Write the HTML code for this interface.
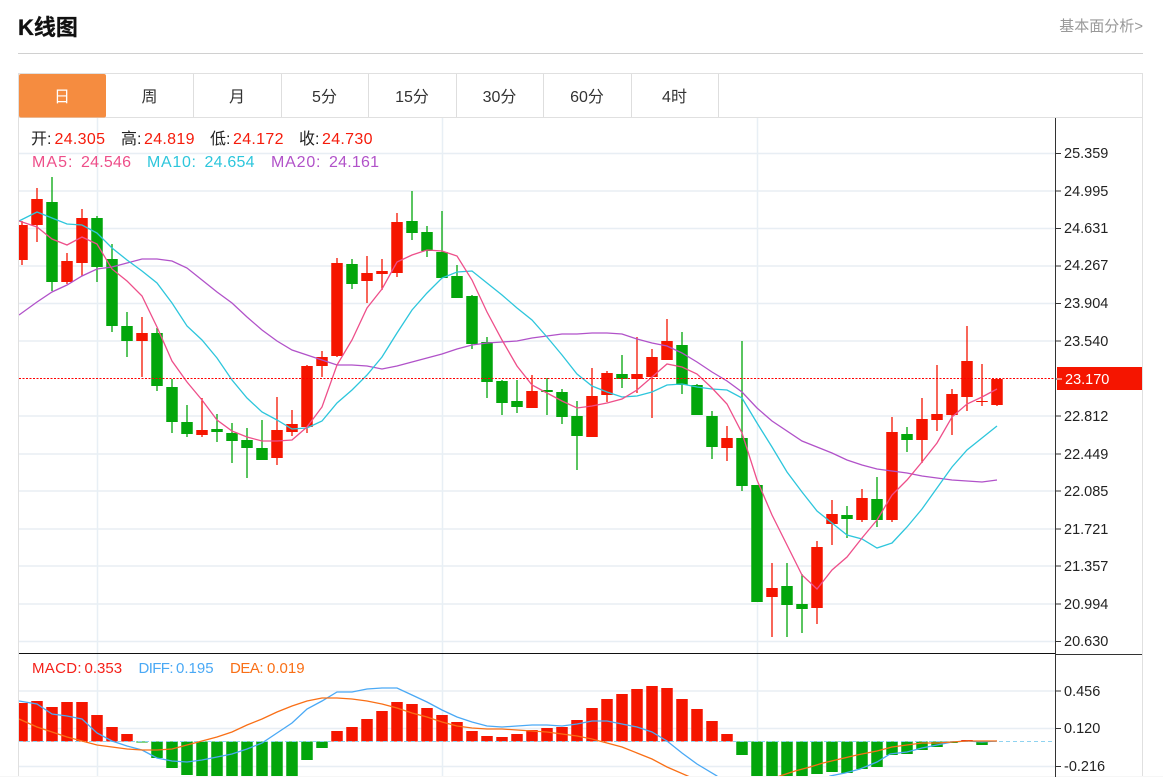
<!DOCTYPE html>
<html lang="zh-CN">
<head>
<meta charset="utf-8">
<title>K线图</title>
<style>
html,body{margin:0;padding:0;background:#fff;width:1163px;height:777px;overflow:hidden}
svg{display:block}
text{font-family:"Liberation Sans","Noto Sans CJK SC",sans-serif}
.ax{font-size:14.5px;fill:#222;dominant-baseline:auto}
.tab{font-size:16px;fill:#333;text-anchor:middle}
.leg{font-size:16px}
.mac{font-size:15px}
</style>
</head>
<body>
<svg width="1163" height="777" viewBox="0 0 1163 777" xmlns="http://www.w3.org/2000/svg">
<defs>
<clipPath id="k"><rect x="19" y="118" width="1036" height="535"/></clipPath>
<clipPath id="m"><rect x="19" y="655" width="1036" height="121"/></clipPath>
</defs>
<text x="18" y="35" font-size="22" font-weight="700" fill="#111" stroke="#111" stroke-width="0.3">K线图</text>
<text x="1143" y="31" font-size="15" fill="#999" text-anchor="end">基本面分析&gt;</text>
<rect x="18" y="53" width="1125" height="1" fill="#d0d0d0"/>

<!-- tab bar / frame -->
<path d="M18.5 777V73.5H1142.5V777M18.5 117.5H1142.5" fill="none" stroke="#e0e0e0"/>
<path d="M193.5 74V117M281.5 74V117M368.5 74V117M456.5 74V117M543.5 74V117M631.5 74V117M718.5 74V117" fill="none" stroke="#dedede"/>
<rect x="19" y="74" width="87" height="43.5" rx="2" fill="#f58c40"/>
<text class="tab" x="62" y="102" style="fill:#fff">日</text>
<text class="tab" x="149.5" y="102">周</text>
<text class="tab" x="237" y="102">月</text>
<text class="tab" x="324.5" y="102">5分</text>
<text class="tab" x="412" y="102">15分</text>
<text class="tab" x="499.5" y="102">30分</text>
<text class="tab" x="587" y="102">60分</text>
<text class="tab" x="674.5" y="102">4时</text>

<!-- grid -->
<path d="M19 153.5H1055M19 191H1055M19 228.5H1055M19 266H1055M19 303.5H1055M19 341H1055M19 416H1055M19 454H1055M19 491H1055M19 529H1055M19 566H1055M19 604H1055M19 641.5H1055M19 691H1055M19 728.5H1055M19 766.5H1055" fill="none" stroke="#e8eef4" stroke-width="1.5"/>
<path d="M97.5 118V777M442.5 118V777M757.5 118V777" fill="none" stroke="#e8eff5" stroke-width="1.5"/>

<g clip-path="url(#k)" fill="none">
<!-- red wicks -->
<path stroke="#f51500" stroke-width="1.3" d="M22 221V265M37 188V242M67 253V284M82 209V276M142 317V377M202 398V437M277 397V465M292 410V436M307 365V433M322 351V377M337 258V357M367 256V303M382 259V290M397 213V277M532 375V408M592 368V437M607 371V402M637 337V393M652 349V418M667 319V360M727 426V461M772 563V637M817 541V624M832 500V545M862 489V522M892 417V522M922 398V463M937 365V431M952 389V435M967 326V411M982 364V406M997 379V406"/>
<!-- red bodies -->
<path stroke="#f51500" stroke-width="11.5" d="M22 225V260M37 199V225M67 261V282M82 218V263M142 333V341M202 430V435M277 430V458M292 424V432M307 366V427M322 357V366M337 263V356M367 273V281M382 271V274M397 222V273M532 391V408M592 396V437M607 373V395M637 374V379M652 357V377M667 341V360M727 438V448M772 588V597M817 547V608M832 514V524M862 498V520M892 432V520M922 419V440M937 414V420M952 394V415M967 361V397M982 401V402M997 379V405"/>
<!-- green wicks -->
<path stroke="#02a60b" stroke-width="1.3" d="M52 177V291M97 216V282M112 244V332M127 312V357M157 328V391M172 379V433M187 405V437M217 414V442M232 423V463M247 428V478M262 420V460M352 259V289M412 191V240M427 226V257M442 211V278M457 265V298M472 295V349M487 337V398M502 380V415M517 380V413M547 378V415M562 389V424M577 401V470M622 355V388M682 332V394M697 384V415M712 411V459M742 341V491M757 485V602M787 563V637M802 574V633M847 506V538M877 477V527M907 427V452"/>
<!-- green bodies -->
<path stroke="#02a60b" stroke-width="11.5" d="M52 202V282M97 218V267M112 259V326M127 326V341M157 333V386M172 387V422M187 422V434M217 429V432M232 433V441M247 440V448M262 448V460M352 264V284M412 221V233M427 232V251M442 252V278M457 276V298M472 296V344M487 342V382M502 381V403M517 401V407M547 390V392M562 392V417M577 416V436M622 374V379M682 345V385M697 385V415M712 416V447M742 438V486M757 485V602M787 586V605M802 604V609M847 515V519M877 499V520M907 434V440"/>
<!-- MA20 -->
<polyline stroke="#b152c9" stroke-width="1.3" points="19,315 37,302 52,292 67,285 82,276 97,269 112,267 127,263 142,259 157,259 172,261 187,268 202,280 217,292 232,303 247,317 262,330 277,341 292,350 307,355 322,360 337,365 352,365 367,366 382,369 397,366 412,362 427,358 442,354 457,349 472,345 487,343 502,342 517,341 532,338 547,336 562,334 577,334 592,333 607,333 622,334 637,339 652,343 667,346 682,353 697,362 712,372 727,381 742,392 757,408 772,421 802,441 817,447 832,453 847,460 862,465 877,469 892,471 907,473 922,476 937,478 952,480 967,481 982,482 997,480"/>
<!-- MA10 -->
<polyline stroke="#2dc6dc" stroke-width="1.3" points="19,221 37,212 52,218 67,224 82,225 97,233 112,248 127,260 142,271 157,283 172,303 187,326 202,340 217,358 232,380 247,398 262,412 277,420 292,429 307,428 322,421 337,403 352,390 367,375 382,357 397,333 412,310 427,293 442,278 457,272 472,271 487,283 502,295 517,308 532,320 547,337 562,355 577,374 592,386 607,392 622,397 637,396 652,392 667,385 682,384 697,387 712,389 727,390 742,398 757,423 772,447 787,472 802,492 817,511 832,523 847,535 862,539 877,548 892,543 907,527 922,509 937,488 952,467 967,450 982,438 997,426"/>
<!-- MA5 -->
<polyline stroke="#ee4f8a" stroke-width="1.3" points="19,221 37,227 52,239 67,245 82,237 97,244 112,269 127,281 142,296 157,327 172,361 187,382 202,400 217,420 232,431 247,437 262,441 277,441 292,440 307,427 322,407 337,365 352,340 367,308 382,289 397,262 412,255 427,250 442,251 457,256 472,280 487,312 502,340 517,366 532,385 547,393 562,401 577,408 592,406 607,403 622,399 637,390 652,377 667,364 682,367 697,374 712,388 727,404 742,433 757,480 772,515 787,545 802,575 817,589 832,570 847,557 862,538 877,520 892,495 907,480 922,462 937,443 952,417 967,404 982,397 997,389"/>
</g>

<!-- last price line -->
<path d="M19 378.5H1055" stroke="#f00" stroke-width="1" stroke-dasharray="2 1.5" fill="none"/>

<!-- MACD separators -->
<rect x="19" y="653" width="1036" height="1" fill="#111"/>
<rect x="1056" y="654" width="86" height="1" fill="#333"/>

<g clip-path="url(#m)" fill="none">
<path stroke="#f51500" stroke-width="11.5" d="M22 703V741.5M37 701V741.5M52 707V741.5M67 702V741.5M82 702V741.5M97 715V741.5M112 727V741.5M127 734V741.5M337 731V741.5M352 727V741.5M367 719V741.5M382 711V741.5M397 702V741.5M412 704V741.5M427 708V741.5M442 715V741.5M457 722V741.5M472 731V741.5M487 736V741.5M502 737V741.5M517 734V741.5M532 730V741.5M547 728V741.5M562 727V741.5M577 720V741.5M592 708V741.5M607 699V741.5M622 694V741.5M637 689V741.5M652 686V741.5M667 688V741.5M682 699V741.5M697 709V741.5M712 721V741.5M727 734V741.5M967 740V741.5"/>
<path stroke="#02a60b" stroke-width="11.5" d="M142 741.5V742.5M157 741.5V758M172 741.5V768M187 741.5V775M202 741.5V780M217 741.5V780M232 741.5V780M247 741.5V780M262 741.5V780M277 741.5V780M292 741.5V776M307 741.5V760M322 741.5V748M742 741.5V755M757 741.5V780M772 741.5V780M787 741.5V780M802 741.5V780M817 741.5V774M832 741.5V772M847 741.5V773M862 741.5V769M877 741.5V767M892 741.5V755M907 741.5V754M922 741.5V750M937 741.5V747M952 741.5V743M982 741.5V745"/>
<path stroke="#8fd3f0" stroke-width="1" stroke-dasharray="4 3" d="M19 741.5H1055"/>
<polyline stroke="#4aa9f5" stroke-width="1.3" points="19,701 37,704 52,714 67,716 82,719 97,733 112,741 127,746 142,750 157,758 172,761 187,762 202,760 217,757 232,754 247,749 262,743 277,733 292,723 307,709 322,701 337,692 352,692 367,689 382,688 397,688 412,695 427,702 442,710 457,717 472,722 487,726 502,727 517,726 532,725 547,725 562,726 577,724 592,721 607,721 622,724 637,727 652,732 667,741 682,753 697,764 717,776 735,800 800,800 830,776 845,773 860,769 877,762 890,754 907,752 922,748 937,745 952,742 967,741 982,742 997,741"/>
<polyline stroke="#f96f16" stroke-width="1.3" points="19,719 37,727 52,732 67,737 82,741 97,745 112,747 127,749 142,750 157,750 172,749 187,745 202,741 217,737 232,732 247,725 262,719 277,712 292,706 307,701 322,698 337,698 352,699 367,701 382,704 397,708 412,713 427,717 442,722 457,726 472,728 487,729 502,729 517,730 532,731 547,732 562,734 577,736 592,739 607,743 622,747 637,753 652,759 667,767 690,777 735,790 780,776 795,771 810,767 823,763 840,759 857,755 877,751 892,747 907,745 922,743 937,743 952,742 967,741 997,741"/>
</g>
<rect x="0" y="776" width="1163" height="1" fill="#f6f6f6"/>

<!-- axis -->
<path d="M1055.5 118V777M1056 153.5H1061M1056 191H1061M1056 228.5H1061M1056 266H1061M1056 303.5H1061M1056 341H1061M1056 379H1061M1056 416H1061M1056 454H1061M1056 491H1061M1056 529H1061M1056 566H1061M1056 604H1061M1056 641.5H1061M1056 691H1061M1056 728.5H1061M1056 766.5H1061" fill="none" stroke="#333"/>
<rect x="1057" y="367" width="85" height="23" fill="#f51500"/>
<path d="M1057 379H1062" stroke="#fff"/>
<text class="ax" x="1064" y="158">25.359</text>
<text class="ax" x="1064" y="196">24.995</text>
<text class="ax" x="1064" y="233">24.631</text>
<text class="ax" x="1064" y="270">24.267</text>
<text class="ax" x="1064" y="308">23.904</text>
<text class="ax" x="1064" y="346">23.540</text>
<text class="ax" x="1065" y="384" style="fill:#fff">23.170</text>
<text class="ax" x="1064" y="421">22.812</text>
<text class="ax" x="1064" y="459">22.449</text>
<text class="ax" x="1064" y="496">22.085</text>
<text class="ax" x="1064" y="534">21.721</text>
<text class="ax" x="1064" y="571">21.357</text>
<text class="ax" x="1064" y="609">20.994</text>
<text class="ax" x="1064" y="646">20.630</text>
<text class="ax" x="1064" y="696">0.456</text>
<text class="ax" x="1064" y="733">0.120</text>
<text class="ax" x="1064" y="771">-0.216</text>

<!-- legends -->
<g class="leg">
<text x="31" y="144" fill="#222">开:</text><text x="54.5" y="144" fill="#f51b0b" textLength="50.5">24.305</text>
<text x="121" y="144" fill="#222">高:</text><text x="144" y="144" fill="#f51b0b" textLength="50.5">24.819</text>
<text x="210" y="144" fill="#222">低:</text><text x="233" y="144" fill="#f51b0b" textLength="50.5">24.172</text>
<text x="299" y="144" fill="#222">收:</text><text x="322" y="144" fill="#f51b0b" textLength="50.5">24.730</text>
<text x="32" y="167" fill="#ee4f8a" textLength="40.5">MA5:</text><text x="81" y="167" fill="#ee4f8a" textLength="50">24.546</text>
<text x="147" y="167" fill="#2dc6dc" textLength="49">MA10:</text><text x="204.5" y="167" fill="#2dc6dc" textLength="50">24.654</text>
<text x="271" y="167" fill="#b152c9" textLength="49.5">MA20:</text><text x="329" y="167" fill="#b152c9" textLength="50">24.161</text>
</g>
<g class="mac">
<text x="32" y="673" fill="#f4211a" textLength="49.5">MACD:</text><text x="84.5" y="673" fill="#f4211a">0.353</text>
<text x="138.5" y="673" fill="#4aa9f5" textLength="35">DIFF:</text><text x="176" y="673" fill="#4aa9f5">0.195</text>
<text x="230" y="673" fill="#f96f16" textLength="33.5">DEA:</text><text x="267" y="673" fill="#f96f16">0.019</text>
</g>
</svg>
</body>
</html>
